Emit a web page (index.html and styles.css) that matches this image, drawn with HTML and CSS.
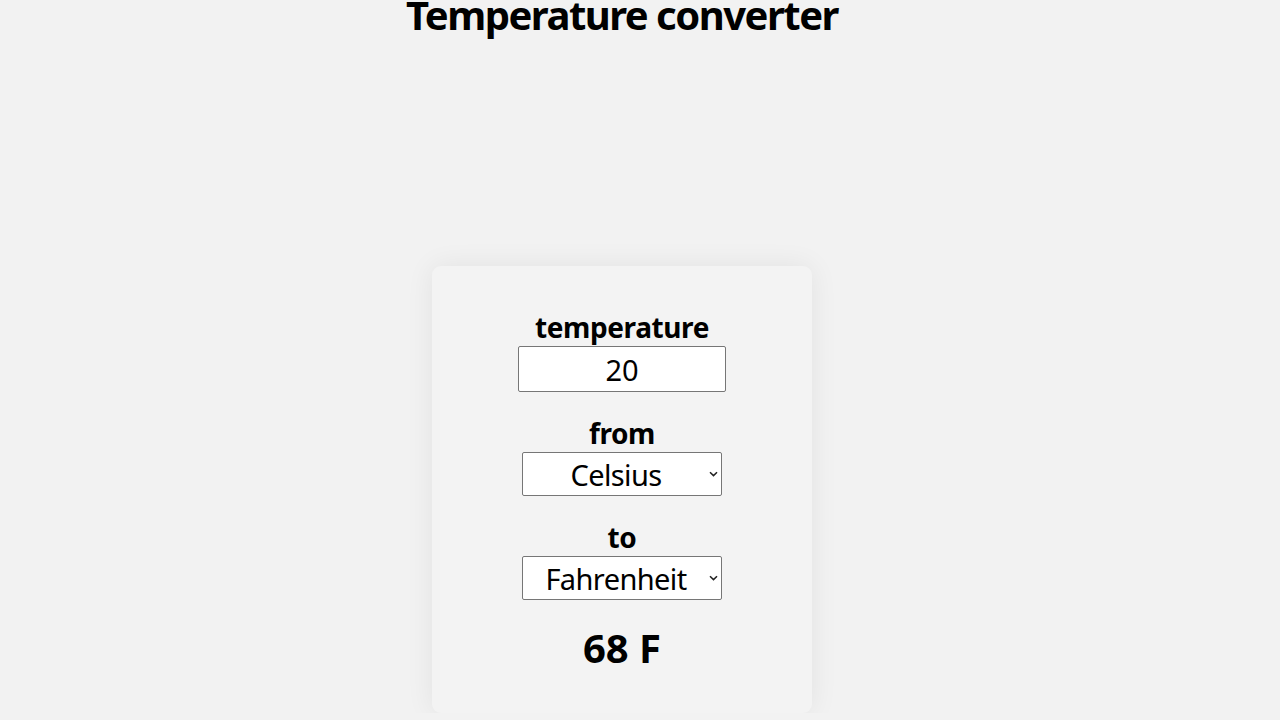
FILE: index.html
```html
<!DOCTYPE html>
<html lang="en">
<head>
<meta charset="utf-8">
<title>Temperature converter</title>
<link rel="stylesheet" href="styles.css">
</head>
<body>
<main class="page">
  <h1 class="title">Temperature converter</h1>
  <section class="card">
    <div class="field">
      <label class="label" for="temp">temperature</label>
      <input class="input" id="temp" type="text" value="20">
    </div>
    <div class="field">
      <label class="label" for="from">from</label>
      <span class="select-wrap">
        <select class="select" id="from">
          <option selected>Celsius</option>
          <option>Fahrenheit</option>
          <option>Kelvin</option>
        </select>
        <svg class="chevron" width="9" height="6" viewBox="0 0 9 6"><path d="M1 1.2 L4.5 4.6 L8 1.2" fill="none" stroke="#222" stroke-width="1.5"/></svg>
      </span>
    </div>
    <div class="field">
      <label class="label" for="to">to</label>
      <span class="select-wrap">
        <select class="select" id="to">
          <option>Celsius</option>
          <option selected>Fahrenheit</option>
          <option>Kelvin</option>
        </select>
        <svg class="chevron" width="9" height="6" viewBox="0 0 9 6"><path d="M1 1.2 L4.5 4.6 L8 1.2" fill="none" stroke="#222" stroke-width="1.5"/></svg>
      </span>
    </div>
    <div class="result">68 F</div>
  </section>
</main>
</body>
</html>
```

FILE: styles.css
```css
html, body {
  margin: 0;
  padding: 0;
  background: #f2f2f2;
  overflow: hidden;
}

body {
  font-family: "Noto Sans", "Open Sans", sans-serif;
  color: #000;
}

.page {
  width: 1244px;
  display: flex;
  flex-direction: column;
  align-items: center;
}

.title {
  margin: -6px 0 0 0;
  font-size: 40px;
  line-height: 42px;
  font-weight: 700;
  letter-spacing: -1.5px;
}

.card {
  margin-top: 230px;
  width: 380px;
  height: 447px;
  box-sizing: border-box;
  padding-top: 43px;
  background: #f3f3f3;
  border-radius: 9px;
  box-shadow: 0 0 28px rgba(0, 0, 0, 0.07);
  display: flex;
  flex-direction: column;
  align-items: center;
  gap: 23px;
}

.field {
  display: flex;
  flex-direction: column;
  align-items: center;
}

.label {
  font-size: 28px;
  line-height: 37px;
  font-weight: 700;
  letter-spacing: -0.4px;
}

.input {
  width: 208px;
  height: 46px;
  box-sizing: border-box;
  border: 1px solid #767676;
  border-radius: 2px;
  background: #fff;
  font-family: inherit;
  font-size: 29px;
  text-align: center;
  padding: 0 4px;
  color: #000;
  outline: none;
}

.select-wrap {
  position: relative;
  display: block;
}

.select {
  appearance: none;
  -webkit-appearance: none;
  width: 200px;
  height: 44px;
  box-sizing: border-box;
  border: 1px solid #767676;
  border-radius: 2px;
  background: #fff;
  font-family: inherit;
  font-size: 29px;
  letter-spacing: -0.6px;
  text-align: center;
  text-align-last: center;
  padding: 0 14px 0 2px;
  color: #000;
  display: block;
  outline: none;
}

.chevron {
  position: absolute;
  right: 4px;
  top: 19px;
  pointer-events: none;
}

.result {
  margin-top: -2px;
  font-size: 40px;
  line-height: 53px;
  font-weight: 700;
}
```
